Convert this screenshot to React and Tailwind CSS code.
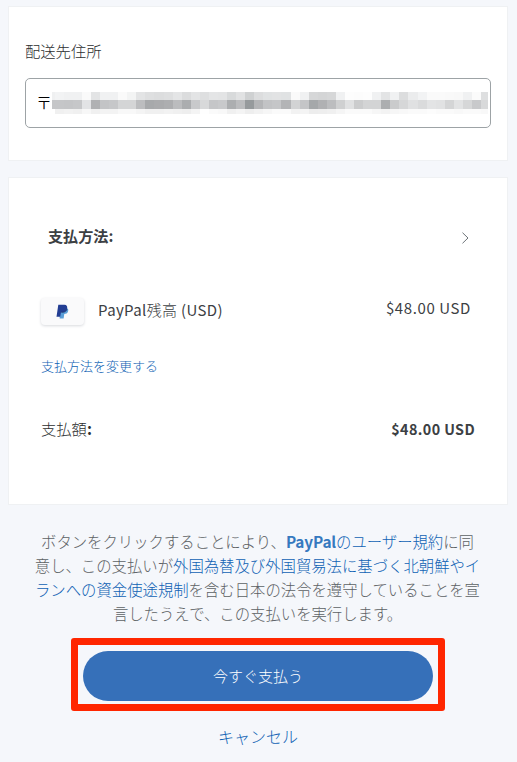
const TOP = "eff0f1 f2f3f4 f0f1f2 f0f1f2 fafafa e3e4e5 f0f1f2 f0f1f2 fafafa f3f4f4 e3e4e5 dedfe0 dcddde dedfe0 e4e5e6 dbdcdd e3e4e5 dedfe0 e4e5e6 e3e4e5 d8dadb e1e2e3 cfd1d2 dcddde e0e2e3 e2e3e4 e0e2e3 fafafa f0f1f2 d6d7d8 d4d5d6 d6d7d8 f0f1f2 fdfdfd fcfcfc fdfdfd f0f1f2 e3e4e5 f0f1f2 dcddde ebeced f2f3f4 fafafa fafafa f9f9f9 f8f8f8 f0f1f2 fbfbfb dedfe0".split(" ");
const MID = "c5c6c8 c5c6c8 c4c5c7 c6c7c9 e2e3e5 b0b1b3 c3c4c6 c6c7c9 d4d5d6 d4d5d6 bcbdbf a7a9ab aaabad adaeb0 bbbcbe abadaf c8c9cb d8d9da c5c6c8 c8c9cb acaeb0 bbbcbe 969a9c b4b5b7 c2c3c5 c5c6c8 b3b4b6 d2d3d4 c4c5c7 a5a8aa b0b1b3 bcbdbf cfd0d1 e0e1e2 cbcccd d3d4d5 d3d4d5 acaeb0 cacbcc d6d7d8 e0e1e2 dadbdc e3e4e5 e1e2e3 d4d5d6 e2e3e4 d6d7d8 c8c9cb d8d9da".split(" ");
const LOW = "ffffff f0f0f0 f2f2f2 f0f0f0 f7f7f7 f0f0f0 f3f3f3 f3f3f3 f8f8f8 f8f8f8 f4f4f4 f0f0f0 f0f0f0 f2f2f2 f0f0f0 eeeeee f4f4f4 fefefe fafafa f8f8f8 f0f0f0 f4f4f4 eeeeee f2f2f2 f6f6f6 fafafa fafafa f2f2f2 f4f4f4 ededed eeeeee f0f0f0 f5f5f5 fafafa fafafa fafafa f6f6f6 f3f3f3 f6f6f6 f8f8f8 fafafa fafafa fcfcfc fafafa fafafa f8f8f8 fafafa fafafa f8f8f8".split(" ");

function MosaicRow({ colors, y, height }) {
  return colors.map((c, i) => {
    const x = i === 0 ? 0 : Math.round(2.7 + (i - 1) * 9.07);
    const end = Math.min(436, Math.round(2.7 + i * 9.07));
    return <rect key={i} x={x} y={y} width={Math.max(0, end - x)} height={height} fill={`#${c}`} />;
  });
}

function PayPalMark() {
  return (
    <svg className="h-[15px] w-[13px]" viewBox="0 0 13 15">
      <path d="M4.3 4H10.6C12.3 4.4 12.6 6 12 7.6 11.4 9.4 10 10 8.3 10L7.6 14.5H3.6Z" fill="#5a9fd8" />
      <path d="M2.3 .7H8.5C10.8 .8 11.6 2.4 11.1 4.5 10.5 7 9.1 8.2 6.8 8.2H5L4.2 12.7H.5Z" fill="#233e93" />
      <path d="M5.2 8.2H7C9 8.1 10.3 7.2 11 5" fill="none" stroke="#24376f" strokeWidth=".8" />
    </svg>
  );
}

export default function App() {
  return (
    <div className="h-[762px] w-[517px] overflow-hidden bg-[#f5f7fb] pt-1.5 pr-[9px] pl-2 font-['Noto_Sans_CJK_JP',sans-serif] text-[15px] text-[#3c4043]">
      <section className="h-[155px] border border-[#eff1f3] bg-white px-4 pt-8">
        <h2 className="h-[39px] text-[15.3px] leading-[22px] font-light text-[#2c2e2f]">配送先住所</h2>
        <div className="flex h-[50px] w-[466px] items-center rounded-[5px] border border-[#9da3a6] pl-[10px]">
          <span className="w-4 pb-0.5 text-[16px] leading-6 font-light text-black">〒</span>
          <svg className="h-[22px] w-[436px]" viewBox="0 0 436 22" shapeRendering="crispEdges">
            <MosaicRow colors={TOP} y={0} height={8} />
            <MosaicRow colors={MID} y={8} height={9} />
            <MosaicRow colors={LOW} y={17} height={5} />
          </svg>
        </div>
      </section>

      <section className="mt-4 h-[328px] border border-[#eff1f3] bg-white px-8 pt-[45px]">
        <div className="flex h-6 items-center justify-between pr-[6px] pl-[7px]">
          <h2 className="text-[15.1px] font-bold">支払方法:</h2>
          <svg className="mt-[5px] h-3 w-2" viewBox="0 0 8 12" fill="none" stroke="#6c7378" strokeWidth="1">
            <path d="M1.5 .7 7 6 1.5 11.3" />
          </svg>
        </div>
        <div className="mt-[50px] flex h-7 items-start justify-between pr-1">
          <div className="flex items-center">
            <div className="mt-px flex h-[27px] w-[43px] items-center justify-center rounded bg-[#fafafb] shadow-[0_1px_3px_#d8dade]">
              <PayPalMark />
            </div>
            <span className="ml-[14px] pb-0.5 text-[15px] leading-[22px] tracking-[0.35px]">PayPal<span className="font-light">残高</span> (USD)</span>
          </div>
          <span className="text-[15px] leading-[22px] tracking-[0.6px]">$48.00 USD</span>
        </div>
        <a className="mt-[31px] block text-[13px] leading-5 font-light text-[#0f62b4]">支払方法を変更する</a>
        <div className="mt-[41px] flex h-6 items-center justify-between">
          <span className="pb-0.5 text-[15.3px] font-light text-[#2c2e2f]">支払額<span className="font-bold">:</span></span>
          <span className="text-[14.3px] font-bold tracking-[0.4px]">$48.00 USD</span>
        </div>
      </section>

      <p className="mt-6 -ml-px text-center text-[15.36px] leading-6 font-light whitespace-nowrap text-[#5c6164]">
        ボタンをクリックすることにより、<span className="text-[#0f62b4]"><span className="font-bold tracking-[-0.15px] text-[#3579bf]">PayPal</span>のユーザー規約</span>に同<br />
        意し、この支払いが<span className="text-[#0f62b4]">外国為替及び外国貿易法に基づく北朝鮮やイ</span><br />
        <span className="text-[#0f62b4]">ランへの資金使途規制</span>を含む日本の法令を遵守していることを宣<br />
        言したうえで、この支払いを実行します。
      </p>
      <div className="mt-[13px] ml-[63px] flex h-[73px] w-[374px] items-end justify-center rounded-[3px] border-[7px] border-[#ff2600] pb-[3px]">
        <button className="h-[50px] w-[350px] rounded-full bg-[#3670b9] text-[15px] font-light text-white">今すぐ支払う</button>
      </div>
      <a className="mt-[13px] block text-center text-[16px] leading-6 font-light text-[#0f62b4]">キャンセル</a>
    </div>
  );
}
